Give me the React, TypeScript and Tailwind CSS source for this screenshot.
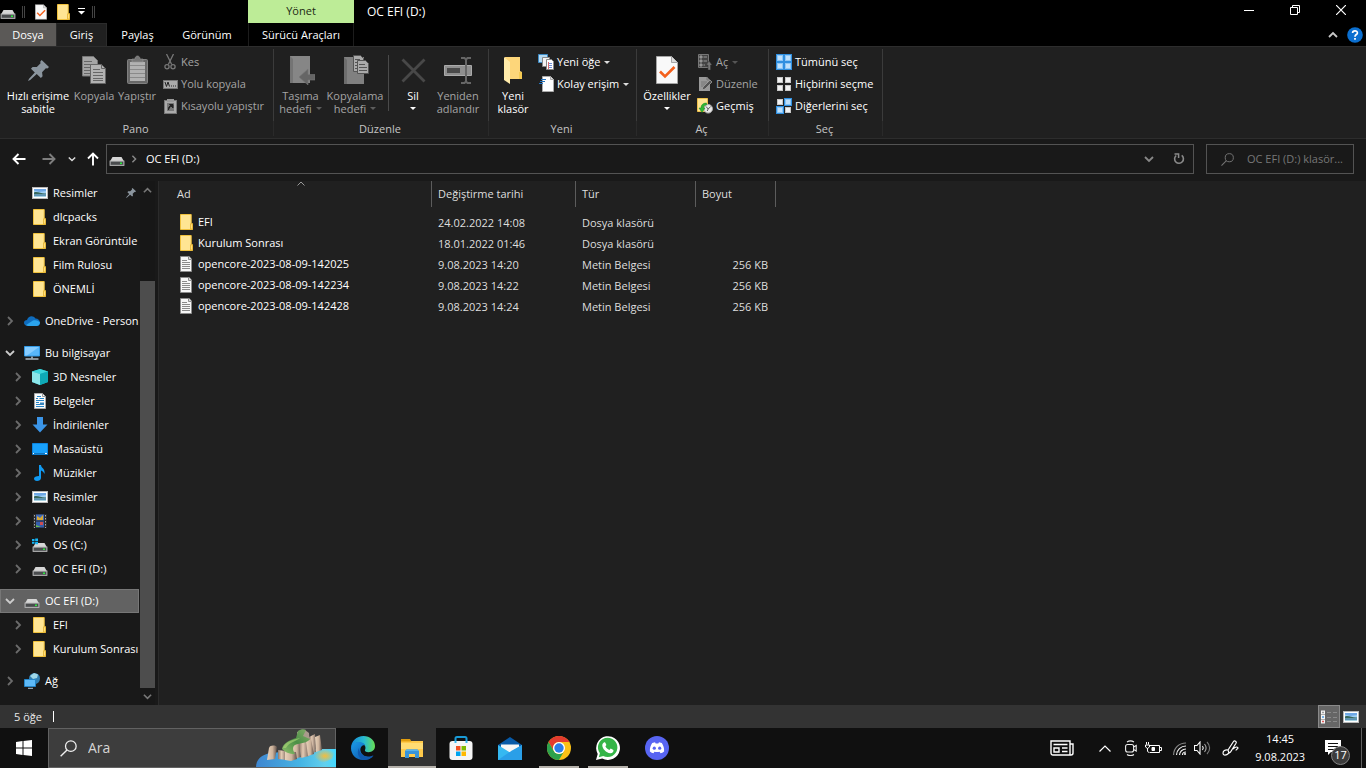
import type { ReactNode } from "react";

/* ---------- shared icons ---------- */

function Folder() {
  return (
    <svg width="16" height="16" viewBox="0 0 16 16" className="shrink-0">
      <path d="M1.500.500h10.700v9.300h1.300v5.700h-12z" fill="#ffe593" stroke="#f0c13c" />
      <path d="M11.500 15V9.800h2V15z" fill="#ffe07c" stroke="#e2b02e" strokeWidth=".8" />
    </svg>
  );
}

function TextFile() {
  return (
    <svg width="16" height="16" viewBox="0 0 16 16" className="shrink-0">
      <path d="M1.500.500h8.600l2.400 2.400v12.600h-11z" fill="#f7f7f7" stroke="#8c8c8c" />
      <path d="M9.500.500v3h3" fill="#ddd" stroke="#8c8c8c" />
      <path d="M3 4.500h5M3 6.500h8M3 8.500h8M3 10.500h8M3 12.500h8" stroke="#8a8a8a" />
    </svg>
  );
}

function Drive({ system = false }: { system?: boolean }) {
  return (
    <svg width="16" height="16" viewBox="0 0 16 16" className="shrink-0">
      <path d="M3.500 6h9L15 10.500H1z" fill="#d6d6d6" />
      <rect x="1" y="10" width="14" height="4.500" fill="#6f7073" stroke="#bdbdbd" strokeWidth=".8" />
      <rect x="2" y="11" width="12" height="2.500" fill="#4a4c4e" />
      <rect x="11" y="11.500" width="2" height="1.500" fill="#2bea3d" />
      {system && (
        <path d="M0 2h2.500v2H0zM3.200 1.500h2.800v2.500H3.200zM0 4.800h2.500v2H0zM3.200 4.800h2.800v2.400H3.200z" fill="#15b5f5" />
      )}
    </svg>
  );
}

function Picture() {
  return (
    <svg width="16" height="16" viewBox="0 0 16 16" className="shrink-0">
      <rect x=".5" y="2.500" width="15" height="11" fill="#fff" stroke="#b9b9b9" />
      <rect x="2" y="4" width="12" height="8" fill="#9fd0f5" />
      <path d="M2 4h12v2L7 7 2 5.500z" fill="#6fa8e6" />
      <path d="M2 7.500c4-1.500 7 1.500 12 1v1H2z" fill="#38685d" />
      <path d="M2 9.500h12V12H2z" fill="#5c93b5" />
      <path d="M2 11h12v1H2z" fill="#a7d3e2" />
    </svg>
  );
}

function Pin({ size = 16 }: { size?: number }) {
  return (
    <svg width={size} height={size} viewBox="0 0 20 20" className="shrink-0">
      <path
        d="M13 0l7 6.600-1.500 1.600-1.500-.3-3.600 3.800.5 3.800-1.600 1.700-4-3.800L2.100 19 0 20l1-2.200 5.500-6L2.800 8.300 4.400 6.600l4 .1L12 3l-.4-1.400z"
        fill="#8b959e"
      />
    </svg>
  );
}

function Chevron({ dir, color = "#777", size = 10 }: { dir: "up" | "down" | "right"; color?: string; size?: number }) {
  const path = { up: "M1 7l4-4 4 4", down: "M1 3l4 4 4-4", right: "M3 1l4 4-4 4" }[dir];
  return (
    <svg width={size} height={size} viewBox="0 0 10 10" className="shrink-0">
      <path d={path} fill="none" stroke={color} strokeWidth="1.800" />
    </svg>
  );
}

function Caret({ color = "#fff" }: { color?: string }) {
  return (
    <svg width="6" height="3" viewBox="0 0 6 3" className="shrink-0">
      <path d="M0 0h6L3 3z" fill={color} />
    </svg>
  );
}

function Checked({ width, height }: { width: number; height: number }) {
  return (
    <svg width={width} height={height} viewBox="0 0 22 28" className="shrink-0">
      <path d="M.5.500h15l6 6v21H.5z" fill="#f9f9f9" stroke="#a5a5a5" />
      <path d="M15.500.500v6h6" fill="#dcdcdc" stroke="#a5a5a5" />
      <path d="M4 15.500l5 5 9.500-9.500" fill="none" stroke="#f4601c" strokeWidth="2.600" />
    </svg>
  );
}

/* ---------- title bar and tabs ---------- */

function TitleBar() {
  return (
    <div className="flex h-[23px]">
      <div className="flex w-[248px] items-center">
        <Drive />
        <span className="ml-[6px] h-3 w-[3px] border-x border-[#444]" />
        <button aria-label="Özellikler" className="ml-[10px]"><Checked width={12} height={16} /></button>
        <button aria-label="Yeni klasör" className="ml-[9px]"><Folder /></button>
        <button aria-label="Hızlı Erişim Araç Çubuğunu Özelleştir" className="ml-[6px]">
          <svg width="7" height="7" viewBox="0 0 7 7">
            <path d="M0 .5h7" stroke="#fff" />
            <path d="M0 3h7L3.500 6.500z" fill="#fff" />
          </svg>
        </button>
        <span className="ml-[7px] h-3 w-[3px] border-x border-[#444]" />
      </div>
      <div className="flex w-[106px] items-center justify-center bg-[#bdec97] pb-[2px] text-[#1c2a12]">Yönet</div>
      <h1 className="flex flex-1 items-center pl-[13px] text-[12px]">OC EFI (D:)</h1>
      <div className="flex pr-[2px]">
        <button aria-label="Simge durumuna küçült" className="flex w-[46px] justify-center pt-[5px]">
          <svg width="10" height="10" viewBox="0 0 10 10"><path d="M0 5.500h10" stroke="#fff" /></svg>
        </button>
        <button aria-label="Önceki boyut" className="flex w-[46px] justify-center pt-[5px]">
          <svg width="10" height="10" viewBox="0 0 10 10">
            <path d="M.5 2.500h7v7h-7zM2.500 2V.5h7v7H8" fill="none" stroke="#fff" />
          </svg>
        </button>
        <button aria-label="Kapat" className="flex w-[46px] justify-center pt-[5px]">
          <svg width="10" height="10" viewBox="0 0 10 10"><path d="M0 0l10 10M10 0L0 10" stroke="#fff" strokeWidth="1.200" /></svg>
        </button>
      </div>
    </div>
  );
}

function TabRow() {
  return (
    <div className="flex h-[23px]">
      <button className="w-14 bg-[#5b5957]">Dosya</button>
      <button className="w-[51px] border-x border-t border-[#2b2b2b] bg-[#202020]">Giriş</button>
      <button className="w-[61px]">Paylaş</button>
      <button className="mr-[2px] w-[78px]">Görünüm</button>
      <button className="w-[106px] border-x border-[#1c1c1c]">Sürücü Araçları</button>
      <div className="flex flex-1 items-center justify-end gap-[9px] pr-[3px]">
        <button aria-label="Şeridi küçült"><Chevron dir="up" color="#c8c8c8" /></button>
        <button aria-label="Yardım">
          <svg width="16" height="16" viewBox="0 0 16 16">
            <circle cx="8" cy="8" r="7.800" fill="#0b6fd0" />
            <path d="M5.600 6C5.600 3.200 10.400 3.200 10.400 5.900 10.400 7.500 8 7.600 8 9.700" fill="none" stroke="#fff" strokeWidth="1.700" />
            <path d="M7.100 11h1.800v1.800H7.100z" fill="#fff" />
          </svg>
        </button>
      </div>
    </div>
  );
}

/* ---------- ribbon ---------- */

function Group({ label, width, children }: { label: string; width: string; children: ReactNode }) {
  return (
    <section aria-label={label} className={`flex flex-col py-[2px] ${width}`}>
      <div className="flex flex-1 border-r border-[#3b3b3b]">
        <div className="flex flex-1 pt-[2px]">{children}</div>
      </div>
      <div className="h-[15px] border-r border-[#2a2a2a] pr-[2px] text-center text-[#c5c5c5]">{label}</div>
    </section>
  );
}

function Big({ icon, lines, width, disabled, caret }: {
  icon: ReactNode; lines: string[]; width: string; disabled?: boolean; caret?: "own" | "inline";
}) {
  return (
    <button className={`flex flex-col items-center whitespace-nowrap leading-[13px] ${width} ${disabled ? "text-[#a5a5a5]" : "text-white"}`}>
      <span className="flex h-[38px] items-center justify-center">{icon}</span>
      <span>{lines[0]}</span>
      {lines[1] && (
        <span className="flex items-center gap-1">
          {lines[1]}
          {caret === "inline" && <Caret color="#5d5d5d" />}
        </span>
      )}
      {caret === "own" && <span className="flex h-[13px] items-center"><Caret /></span>}
    </button>
  );
}

function Small({ icon, label, disabled, caret }: { icon: ReactNode; label: string; disabled?: boolean; caret?: boolean }) {
  return (
    <button className={`flex h-[22px] items-center whitespace-nowrap ${disabled ? "text-[#a5a5a5]" : "text-white"}`}>
      <span className="mr-[3px] flex w-4 justify-center">{icon}</span>
      {label}
      {caret && <span className="ml-1"><Caret color={disabled ? "#555" : "#ddd"} /></span>}
    </button>
  );
}

function SelectIcon({ on }: { on: boolean[] }) {
  const spots = [[0, 0], [8, 0], [0, 8], [8, 8]];
  return (
    <svg width="16" height="16" viewBox="0 0 16 16">
      {spots.map(([x, y], i) => (
        <g key={i}>
          {on[i] && <rect x={x} y={y} width="8" height="8" fill="#2f8fe0" />}
          <rect x={x + 1.5} y={y + 1.5} width="5" height="5" fill={on[i] ? "#bfe0fb" : "#f2f2f2"} stroke={on[i] ? "#8cc6f6" : "#c8c8c8"} />
        </g>
      ))}
    </svg>
  );
}

const copyIcon = (
  <svg width="26" height="30" viewBox="0 0 26 30">
    <path d="M1.500 1.500h11l4 4V21h-15z" fill="#a5a5a5" stroke="#777" />
    <path d="M3 6.500h8M3 9.500h9M3 12.500h9M3 15.500h9M3 18.500h9" stroke="#666" />
    <path d="M9.500 9.500h11l4 4v15h-15z" fill="#b2b2b2" stroke="#666" />
    <path d="M20.500 9.500v4h4M12 14.500h7M12 17.500h10M12 20.500h10M12 23.500h10M12 25.500h10" fill="none" stroke="#666" />
  </svg>
);
const pasteIcon = (
  <svg width="21" height="30" viewBox="0 0 21 30">
    <rect x=".5" y="4.500" width="20" height="24" rx="1" fill="#686868" stroke="#808080" />
    <path d="M3 7h15v19H3z" fill="#b2b2b2" />
    <path d="M3 10.500h15M3 14.500h15M3 18.500h15M3 22.500h15" stroke="#8a8a8a" />
    <path d="M5 7V4h3c0-4 5-4 5 0h3v3z" fill="#777" stroke="#999" strokeWidth=".6" />
  </svg>
);
const cutIcon = (
  <svg width="12" height="16" viewBox="0 0 12 16" fill="none" stroke="#777" strokeWidth="1.300">
    <path d="M2.500 0l5.200 10.500M9.500 0L4.300 10.500" /><circle cx="3" cy="12.800" r="2.100" /><circle cx="9" cy="12.800" r="2.100" />
  </svg>
);
const pathIcon = (
  <svg width="15" height="9" viewBox="0 0 15 9">
    <rect x=".5" y=".5" width="14" height="8" fill="#aaa" stroke="#777" />
    <path d="M2 2l1.500 4.500L5 2l1.500 4.500M8 6h1M10 6h1M12 6h1" fill="none" stroke="#222" />
  </svg>
);
const pasteLinkIcon = (
  <svg width="13" height="15" viewBox="0 0 13 15">
    <rect x=".5" y="1.500" width="12" height="13" fill="#aaa" stroke="#777" /><path d="M3 0h7v3H3z" fill="#999" />
    <path d="M3 4h7v8H3z" fill="#777" /><path d="M4.500 11c0-3 .5-4 3-4.500M5.500 5.500H9V9z" fill="#222" stroke="#222" />
  </svg>
);
const moveIcon = (
  <svg width="28" height="30" viewBox="0 0 28 30">
    <path d="M3 1h20v27H3z" fill="#868686" /><path d="M3 1l3 3v24H3z" fill="#747474" />
    <path d="M28 19.500h-7v-5.500l-9 8 9 8v-5h7z" fill="#656565" stroke="#777" strokeWidth=".6" />
  </svg>
);
const copyToIcon = (
  <svg width="28" height="32" viewBox="0 0 28 32">
    <path d="M3 3h20v27H3z" fill="#808080" /><path d="M3 3l3 3v24H3z" fill="#6d6d6d" />
    <path d="M12.500 1.500h7l3 3v13h-10z" fill="#aaa" stroke="#555" /><path d="M14 5.500h5M14 8.500h7M14 11.500h7M14 14.500h7" stroke="#555" />
    <path d="M16.500 6.500h8l3 3v10h-11z" fill="#aaa" stroke="#555" /><path d="M18 10.500h6M18 13.500h8M18 16.500h8" stroke="#555" />
  </svg>
);
const deleteIcon = (
  <svg width="25" height="25" viewBox="0 0 25 25"><path d="M1.500 1.500l22 22M23.500 1.500l-22 22" stroke="#484848" strokeWidth="2.800" /></svg>
);
const renameIcon = (
  <svg width="28" height="27" viewBox="0 0 28 27">
    <path d="M.5 8.500h27v10H.5z" fill="#8f8f8f" stroke="#aaa" /><path d="M3 11h13v5H3z" fill="#4a4a4a" />
    <path d="M17 1h3.500l1.500 1.500L23.500 1H27M22 2v23M17 26h3.500l1.500-1.500 1.500 1.500H27" fill="none" stroke="#666" strokeWidth="2" />
  </svg>
);
const newFolderIcon = (
  <svg width="20" height="28" viewBox="0 0 20 28">
    <path d="M2 1h15v14l2 1v7H2z" fill="#fdd67a" /><path d="M1 1l6 5v22l-6-4z" fill="#ffebaa" />
    <path d="M16 16h3v7h-3z" fill="#f5ca53" />
  </svg>
);
const newItemIcon = (
  <svg width="16" height="16" viewBox="0 0 16 16">
    <path d="M.5.500h9v8h-9z" fill="#b4daf3" stroke="#3c8ac5" /><path d="M4.500 3.500h7v9h-7z" fill="#f3f3f3" stroke="#888" />
    <path d="M8.500 5.500h5l2 2v8h-7z" fill="#fff" stroke="#888" /><path d="M10 9.500h4M10 11.500h4M10 13.500h4" stroke="#6d8fd8" /><path d="M10.500 8v7" stroke="#dc6d70" />
  </svg>
);
const easyIcon = (
  <svg width="15" height="16" viewBox="0 0 15 16">
    <path d="M3.500.500h8l3 3v12h-11z" fill="#fff" stroke="#aaa" /><path d="M11.500.500v3h3" fill="#ddd" stroke="#aaa" />
    <path d="M2 3.500h5M1 5.500h5M0 7.500h4" stroke="#2472bd" strokeWidth="1.200" />
  </svg>
);
const openIcon = (
  <svg width="14" height="16" viewBox="0 0 14 16">
    <path d="M.5.500h10v13H.5z" fill="#444" stroke="#777" /><path d="M2 2h2v2H2zM2 6h2v2H2zM2 10h2v2H2zM5.500 3H9M5.500 7H9M5.500 11H7" stroke="#999" fill="#888" />
    <path d="M10 16V11H8l3-4 3 4h-1.500v5z" fill="#777" stroke="#333" strokeWidth=".5" />
  </svg>
);
const editIcon = (
  <svg width="14" height="16" viewBox="0 0 14 16">
    <path d="M1 1h8l3 3v11H1z" fill="#999" /><path d="M9 1v3h3M3 6h6M3 8h6M3 10h4" stroke="#777" fill="none" /><path d="M4 14l1-3 7-7 2 2-7 7z" fill="#555" stroke="#aaa" strokeWidth=".7" />
  </svg>
);
const historyIcon = (
  <svg width="16" height="16" viewBox="0 0 16 16">
    <path d="M.5.500h10v13H.5z" fill="#ffe593" stroke="#edc04a" /><circle cx="11.200" cy="10.800" r="4.300" fill="#e8e8e8" stroke="#aaa" />
    <path d="M9 8.500l2.200 2.500 2.500-2.500M11.200 11l-1 2" fill="none" stroke="#555" /><path d="M9.500 5C6 5 4 7 4 10H2l3 4.500L8 10H6.500c0-2 1-3 3-3z" fill="#30b832" stroke="#198327" strokeWidth=".5" />
  </svg>
);

function Ribbon() {
  return (
    <div className="flex h-[93px] border-y border-[#2d2d2d] bg-[#202020]">
      <Group label="Pano" width="w-[274px]">
        <div className="flex pl-[5px]">
          <Big icon={<Pin size={21} />} lines={["Hızlı erişime", "sabitle"]} width="w-[66px]" />
          <Big icon={copyIcon} lines={["Kopyala"]} width="w-[46px]" disabled />
          <Big icon={pasteIcon} lines={["Yapıştır"]} width="w-10" disabled />
          <div className="pl-[5px]">
            <Small icon={cutIcon} label="Kes" disabled />
            <Small icon={pathIcon} label="Yolu kopyala" disabled />
            <Small icon={pasteLinkIcon} label="Kısayolu yapıştır" disabled />
          </div>
        </div>
      </Group>
      <Group label="Düzenle" width="w-[215px]">
        <div className="flex pl-[1px]">
          <Big icon={moveIcon} lines={["Taşıma", "hedefi"]} width="w-[51px]" disabled caret="inline" />
          <Big icon={copyToIcon} lines={["Kopyalama", "hedefi"]} width="w-[58px]" disabled caret="inline" />
          <span className="mx-[4px] mt-1 h-[56px] w-px bg-[#4a4a4a]" />
          <Big icon={deleteIcon} lines={["Sil"]} width="w-[40px]" caret="own" />
          <Big icon={renameIcon} lines={["Yeniden", "adlandır"]} width="w-[50px]" disabled />
        </div>
      </Group>
      <Group label="Yeni" width="w-[148px]">
        <div className="flex pl-[2px]">
          <Big icon={newFolderIcon} lines={["Yeni", "klasör"]} width="w-[44px]" />
          <div className="pl-[3px]">
            <Small icon={newItemIcon} label="Yeni öğe" caret />
            <Small icon={easyIcon} label="Kolay erişim" caret />
          </div>
        </div>
      </Group>
      <Group label="Aç" width="w-[132px]">
        <div className="flex pl-[2px]">
          <Big icon={<Checked width={22} height={28} />} lines={["Özellikler"]} width="w-[56px]" caret="own" />
          <div className="pl-[2px]">
            <Small icon={openIcon} label="Aç" disabled caret />
            <Small icon={editIcon} label="Düzenle" disabled />
            <Small icon={historyIcon} label="Geçmiş" />
          </div>
        </div>
      </Group>
      <Group label="Seç" width="w-[114px]">
        <div className="pl-[7px]">
          <Small icon={<SelectIcon on={[true, true, true, true]} />} label="Tümünü seç" />
          <Small icon={<SelectIcon on={[false, false, false, false]} />} label="Hiçbirini seçme" />
          <Small icon={<SelectIcon on={[false, true, true, false]} />} label="Diğerlerini seç" />
        </div>
      </Group>
    </div>
  );
}

/* ---------- address row ---------- */

function Arrow({ d, color, label, width }: { d: string; color: string; label: string; width: string }) {
  return (
    <button aria-label={label} className={`flex justify-center ${width}`}>
      <svg width="14" height="14" viewBox="0 0 14 14"><path d={d} fill="none" stroke={color} strokeWidth="1.900" /></svg>
    </button>
  );
}

function Loupe({ size, color }: { size: number; color: string }) {
  return (
    <svg width={size} height={size} viewBox="0 0 16 16" className="shrink-0">
      <circle cx="10.200" cy="5.800" r="5" fill="none" stroke={color} strokeWidth="1.200" />
      <path d="M6.600 9.400L.6 15.400" stroke={color} strokeWidth="1.300" />
    </svg>
  );
}

function AddressRow() {
  return (
    <div className="flex h-[42px] items-center pr-3 pb-[2px]">
      <div className="flex w-[106px] items-center pl-1">
        <Arrow d="M13.500 7H1.500M6.500 2L1.500 7l5 5" color="#fff" label="Geri" width="w-[30px]" />
        <Arrow d="M.5 7h12M7.500 2l5 5-5 5" color="#7d7d7d" label="İleri" width="w-[30px]" />
        <button aria-label="Son konumlar" className="flex w-4 justify-center"><Chevron dir="down" color="#ddd" size={8} /></button>
        <Arrow d="M7 13.500V1.500M2 6.500l5-5 5 5" color="#fff" label="Yukarı" width="w-[26px]" />
      </div>
      <div className="flex h-[30px] flex-1 items-center border border-[#535353]">
        <span className="ml-[2px]"><Drive /></span>
        <span className="ml-[5px]"><Chevron dir="right" color="#888" size={8} /></span>
        <button className="ml-2 text-white">OC EFI (D:)</button>
        <span className="flex-1" />
        <button aria-label="Önceki konumlar" className="mr-[11px]"><Chevron dir="down" color="#888" /></button>
        <button aria-label="Yenile" className="ml-2 mr-[8px]">
          <svg width="12" height="12" viewBox="0 0 12 12">
            <path d="M8.700 2.400A4.400 4.400 0 1 1 3.200 2.500" fill="none" stroke="#8a8a8a" strokeWidth="1.600" />
            <path d="M1.500.900h4.100v4.100" fill="none" stroke="#8a8a8a" strokeWidth="1.500" />
          </svg>
        </button>
      </div>
      <label className="ml-3 flex h-[30px] w-[148px] items-center border border-[#535353] pr-1 pl-[14px]">
        <Loupe size={13} color="#747474" />
        <input aria-label="Klasörde ara" placeholder="OC EFI (D:) klasör..." className="ml-[13px] w-full min-w-0 bg-transparent outline-none placeholder:text-[#777]" />
      </label>
    </div>
  );
}

/* ---------- navigation tree ---------- */

const cloud = (
  <svg width="16" height="16" viewBox="0 0 16 16">
    <path d="M3 7C4 3 9 1.500 11.500 5.500 14 5.500 16 7.500 16 9.500 16 12 14 13 12.500 13H4C1.500 13 0 11.500 0 9.700 0 8 1.500 7 3 7z" fill="#0f6cbd" />
    <path d="M2 12L9 7.500c3-1 6 .5 7 2C16 12 14 13 12.500 13H4z" fill="#2ba3ec" />
  </svg>
);
const pc = (
  <svg width="16" height="16" viewBox="0 0 16 16">
    <path d="M.5 1.500h15v9.500H.5z" fill="#58b6fa" stroke="#329ae6" /><path d="M1 2h14L3 10.500H1z" fill="#86ccff" />
    <path d="M7 11.500h2v2H7z" fill="#8a9aa8" /><path d="M1.500 14h13" stroke="#b8c4cf" strokeWidth="1.400" />
  </svg>
);
const cube = (
  <svg width="16" height="16" viewBox="0 0 16 16">
    <path d="M8 0l8 2.500v10.500L8 16 0 13V2.500z" fill="#1eb9c4" /><path d="M8 0l8 2.500L8 5 0 2.500z" fill="#3cd5dc" />
    <path d="M0 2.500L8 5v11l-8-3z" fill="#8be6ea" /><path d="M8 5l8-2.500v10.500L8 16z" fill="#0fa9b6" />
  </svg>
);
const doc = (
  <svg width="16" height="16" viewBox="0 0 16 16">
    <path d="M2.500.500h8l3 3v12h-11z" fill="#fafafa" stroke="#aaa" /><path d="M10.500.500v3h3" fill="none" stroke="#999" />
    <path d="M4 5.500h2M5 3.500h4M7.500 5.500h4.500M4 7.500h8M4 9.500h3M4 11.500h4M4 13.500h8" stroke="#2784c6" /><path d="M8 9.500h4v2.500H8z" fill="#3684bd" />
  </svg>
);
const down = <svg width="16" height="16" viewBox="0 0 16 16"><path d="M5 0h6v7.500h4.500L8 15.500.5 7.500H5z" fill="#3b95e8" /></svg>;
const desk = (
  <svg width="16" height="16" viewBox="0 0 16 16">
    <path d="M.5 2.500h15v11H.5z" fill="#18a0fb" stroke="#0c83dd" /><path d="M0 12h16v1.500H0z" fill="#1074bd" /><path d="M1 12.500h1M13 12.500h2" stroke="#fff" />
  </svg>
);
const note = (
  <svg width="16" height="16" viewBox="0 0 16 16"><path d="M7 0h2c0 3 4.500 3.500 3.500 9-.8-2-2-3-3.500-3.500V13c0 2-2 3-4 3s-3-1-3-2.500S4 11 7 11z" fill="#109af2" /></svg>
);
const video = (
  <svg width="16" height="16" viewBox="0 0 16 16">
    <path d="M1 1h14v14H1z" fill="#292929" /><path d="M4 1.500h8v6H4z" fill="#406bbc" /><path d="M4 8.500h8v6H4z" fill="#355dad" />
    <path d="M5 3l3 2 3-3v5H5z" fill="#d9a932" /><path d="M8 9h3v3H8z" fill="#cf4e51" /><path d="M4 12l5 2H4z" fill="#65b950" />
    <path d="M2.500 2v13M13.500 2v13" stroke="#aaa" strokeDasharray="1.500 1.500" />
  </svg>
);
const network = (
  <svg width="16" height="16" viewBox="0 0 16 16">
    <circle cx="10.500" cy="5.500" r="5.500" fill="#327fb1" /><path d="M6 3l4-3 4 1.500-1 3.500-4 1z" fill="#9fd8e8" />
    <path d="M.5 6.500h11v7H.5z" fill="#5ebaf8" stroke="#2485c8" /><path d="M4 15.300h5" stroke="#a8c5d9" />
  </svg>
);

type Node = { label: string; icon: ReactNode; level: 0 | 1; open?: boolean; leaf?: boolean; gap?: boolean; pinned?: boolean; selected?: boolean };

const nodes: Node[] = [
  { label: "Resimler", icon: <Picture />, level: 1, leaf: true, pinned: true },
  { label: "dlcpacks", icon: <Folder />, level: 1, leaf: true },
  { label: "Ekran Görüntüle", icon: <Folder />, level: 1, leaf: true },
  { label: "Film Rulosu", icon: <Folder />, level: 1, leaf: true },
  { label: "ÖNEMLİ", icon: <Folder />, level: 1, leaf: true },
  { label: "OneDrive - Person", icon: cloud, level: 0, gap: true },
  { label: "Bu bilgisayar", icon: pc, level: 0, gap: true, open: true },
  { label: "3D Nesneler", icon: cube, level: 1 },
  { label: "Belgeler", icon: doc, level: 1 },
  { label: "İndirilenler", icon: down, level: 1 },
  { label: "Masaüstü", icon: desk, level: 1 },
  { label: "Müzikler", icon: note, level: 1 },
  { label: "Resimler", icon: <Picture />, level: 1 },
  { label: "Videolar", icon: video, level: 1 },
  { label: "OS (C:)", icon: <Drive system />, level: 1 },
  { label: "OC EFI (D:)", icon: <Drive />, level: 1 },
  { label: "OC EFI (D:)", icon: <Drive />, level: 0, gap: true, open: true, selected: true },
  { label: "EFI", icon: <Folder />, level: 1 },
  { label: "Kurulum Sonrası", icon: <Folder />, level: 1 },
  { label: "Ağ", icon: network, level: 0, gap: true },
];

function Sidebar() {
  return (
    <aside className="flex w-[159px] border-r border-[#2b2b2b]">
      <ul className="w-[139px]">
        {nodes.map((n, i) => (
          <li key={i} className={n.gap ? "mt-2" : ""}>
            <button
              className={`flex h-6 w-full items-center border text-left whitespace-nowrap text-white ${n.level ? "pl-[12px]" : "pl-1"} ${n.selected ? "border-[#777] bg-[#626262]" : "border-transparent"}`}
            >
              <span className="w-[19px] shrink-0">
                {!n.leaf && <Chevron dir={n.open ? "down" : "right"} color={n.open ? "#ccc" : "#6b6b6b"} />}
              </span>
              <span className="mr-[5px] shrink-0">{n.icon}</span>
              {n.label}
              {n.pinned && <span className="ml-auto pr-[2px]"><Pin size={10} /></span>}
            </button>
          </li>
        ))}
      </ul>
      <div className="ml-[1px] flex w-[15px] flex-col bg-[#171717]">
        <button aria-label="Yukarı kaydır" className="flex h-[18px] items-center justify-center"><Chevron dir="up" size={9} /></button>
        <div className="grow-[82]" />
        <div className="grow-[407] bg-[#4d4d4d]" />
        <button aria-label="Aşağı kaydır" className="flex h-[17px] items-center justify-center"><Chevron dir="down" size={9} /></button>
      </div>
    </aside>
  );
}

/* ---------- file list ---------- */

const files = [
  { name: "EFI", date: "24.02.2022 14:08", type: "Dosya klasörü", size: "" },
  { name: "Kurulum Sonrası", date: "18.01.2022 01:46", type: "Dosya klasörü", size: "" },
  { name: "opencore-2023-08-09-142025", date: "9.08.2023 14:20", type: "Metin Belgesi", size: "256 KB" },
  { name: "opencore-2023-08-09-142234", date: "9.08.2023 14:22", type: "Metin Belgesi", size: "256 KB" },
  { name: "opencore-2023-08-09-142428", date: "9.08.2023 14:24", type: "Metin Belgesi", size: "256 KB" },
];

function FileList() {
  return (
    <main className="flex-1 bg-[#202020]">
      <table className="table-fixed border-separate border-spacing-0 text-left whitespace-nowrap">
        <colgroup>
          <col className="w-[273px]" />
          <col className="w-[144px]" />
          <col className="w-[120px]" />
          <col className="w-[80px]" />
        </colgroup>
        <thead className="text-[#dedede]">
          <tr className="h-[26px]">
            <th className="relative border-r border-[#5c5c5c] pl-[18px] font-normal">
              Ad
              <span className="absolute inset-x-0 top-0 flex justify-center pl-3">
                <svg width="8" height="5" viewBox="0 0 8 5"><path d="M.5 4.500L4 1l3.500 3.500" fill="none" stroke="#999" /></svg>
              </span>
            </th>
            <th className="border-r border-[#5c5c5c] pl-[6px] font-normal">Değiştirme tarihi</th>
            <th className="border-r border-[#5c5c5c] pl-[6px] font-normal">Tür</th>
            <th className="border-r border-[#5c5c5c] pl-[6px] font-normal">Boyut</th>
          </tr>
        </thead>
        <tbody className="text-[#dedede]">
          <tr aria-hidden="true" className="h-[5px]"><td colSpan={4} /></tr>
          {files.map((f) => (
            <tr key={f.name} className="h-[21px]">
              <td className="pl-5 text-white">
                <span className="flex items-center gap-[3px] pb-px">
                  {f.size ? <TextFile /> : <Folder />}
                  {f.name}
                </span>
              </td>
              <td className="pl-[6px]">{f.date}</td>
              <td className="pl-[6px]">{f.type}</td>
              <td className="pr-2 text-right">{f.size}</td>
            </tr>
          ))}
        </tbody>
      </table>
    </main>
  );
}

function StatusBar() {
  return (
    <footer className="flex h-[23px] items-center bg-[#333] pl-[14px] text-[#e8e8e8]">
      <span>5 öğe</span>
      <span className="ml-[11px] h-[11px] w-px bg-white" />
      <span className="flex-1" />
      <button aria-label="Ayrıntılar" className="flex h-[23px] w-[22px] items-center justify-center border border-[#8a8a8a] bg-[#666]">
        <svg width="16" height="14" viewBox="0 0 16 14">
          <path d="M0 .5h4v4H0zM0 5h4v4H0zM0 9.500h4v4H0z" fill="#f5f5f5" /><path d="M1.200 2.500h1.600" stroke="#888" strokeWidth="1.500" /><path d="M1.200 7h1.600" stroke="#2384d8" strokeWidth="1.500" /><path d="M1.200 11.500h1.600" stroke="#d33" strokeWidth="1.500" />
          <path d="M6 2.500h4M12 2.500h4M6 7.500h4M12 7.500h4M6 11.500h4M12 11.500h4" stroke="#8a8a8a" />
        </svg>
      </button>
      <button aria-label="Büyük simgeler" className="mr-[7px] ml-[3px]"><Picture /></button>
    </footer>
  );
}

/* ---------- taskbar ---------- */

const island = (
  <svg width="80" height="38" viewBox="0 0 80 38">
    <defs>
      <linearGradient id="sea"><stop stopColor="#3f86d0" /><stop offset=".55" stopColor="#45b4e4" /><stop offset=".86" stopColor="#62d0ee" /><stop offset="1" stopColor="#43d9ff" /></linearGradient>
      <linearGradient id="rockA" x1="0" x2="1"><stop stopColor="#e9d3bb" /><stop offset=".55" stopColor="#cdb39c" /><stop offset="1" stopColor="#5f504a" /></linearGradient>
      <linearGradient id="rockB" x1="0" x2="1"><stop stopColor="#8d7769" /><stop offset=".4" stopColor="#e3cab3" /><stop offset="1" stopColor="#77655c" /></linearGradient>
      <linearGradient id="moss" x1="0" y1="1" x2="1" y2="0"><stop stopColor="#8fc06c" /><stop offset=".5" stopColor="#4a8f45" /><stop offset="1" stopColor="#86ad6b" /></linearGradient>
      <radialGradient id="sun"><stop stopColor="#f3bd3c" /><stop offset="1" stopColor="#f3bd3c" stopOpacity="0" /></radialGradient>
    </defs>
    <path d="M0 38c0-7 5-12 14-14l48-4h18v18z" fill="url(#sea)" />
    <path d="M58 20h22l-4 10-10 4-8-6z" fill="url(#sun)" />
    <path d="M53 8l6-3 1 18-7 2z" fill="url(#rockB)" />
    <path d="M59 8l5-2 2 15-6 2z" fill="url(#rockA)" />
    <path d="M41 3l8-2 4 3 1 12-12 3z" fill="#a99a8c" />
    <path d="M36 15l8-2 1 15-7 2z" fill="url(#rockA)" />
    <path d="M43 14l8-2 2 15-8 2z" fill="url(#rockB)" />
    <path d="M50 12l5-2 3 15-6 2z" fill="url(#rockA)" />
    <path d="M13 19c1-3 6-3 8-1l-2 12-8 1z" fill="url(#rockA)" />
    <path d="M22 21l8 1 1 9-9-1z" fill="url(#rockB)" />
    <path d="M29 22l11 1 1 7-6 2-6-1z" fill="url(#rockA)" />
    <path d="M42 2c3-2 6-2 8-1l-3 6 7 3c-2 4-10 4-15 6-2 1-3 4 0 9-6 0-10-2-13-5 1-6 8-9 14-11z" fill="url(#moss)" />
    <path d="M44 9c-3 3-11 4-14 10l-3 0c2-6 8-8 17-10z" fill="#b1d77a" opacity=".6" />
  </svg>
);

const edge = (
  <svg width="24" height="24" viewBox="0 0 24 24">
    <defs>
      <linearGradient id="e1"><stop stopColor="#1488d8" /><stop offset=".55" stopColor="#28bad0" /><stop offset="1" stopColor="#68df52" /></linearGradient>
      <linearGradient id="e2" x1="0" y1="0" x2="1" y2="1"><stop stopColor="#1b9ce8" /><stop offset="1" stopColor="#0b4ba3" /></linearGradient>
    </defs>
    <path d="M0 12C0 5 5.500 0 12.500 0 19 0 24 4.500 24 10c0 4-3 6.200-6.500 6.200-2.500 0-4.200-1-3.500-2.200C16 10 12 6.500 8 6.500 4 6.500 1 9 0 12z" fill="url(#e1)" />
    <path d="M0 12c.5-4 4-6 8-6 3.200 0 5.500 1.300 6.200 3.300C9 8 6.500 17 15 20.500c3 1.200 5.700.3 7.500-.8C20 23 16 24 12 24 5 24 0 18.500 0 12z" fill="url(#e2)" />
    <path d="M8 12c0 5 4.500 8.500 9 8.500 2 0 4-.5 5.500-1.500C20 23 16.500 24 13 24c-5-1-8-7-5-12z" fill="#1059ad" />
  </svg>
);
const explorer = (
  <svg width="22" height="19" viewBox="0 0 22 19">
    <path d="M0 2h22v16H0z" fill="#ffca4b" /><path d="M0 0h9l1.500 2.500H0z" fill="#e19d0e" /><path d="M0 4h22v6H0z" fill="#ffdc73" />
    <path d="M4 19v-7l1.500-1.500h11L18 12v7h-4v-4H8v4z" fill="#3994d9" /><path d="M5.500 10.500h11l1 1.500h-13z" fill="#56b4ee" />
  </svg>
);
const store = (
  <svg width="24" height="24" viewBox="0 0 24 24">
    <path d="M6.500 8V2.500c0-1 .5-1.500 1.500-1.500h8c1 0 1.500.5 1.500 1.500V8" fill="none" stroke="#199bd7" strokeWidth="2" />
    <rect x=".5" y="5" width="23" height="19" rx="3" fill="#f5f5f5" /><path d="M6.500 5v2M17.500 5v2" stroke="#36b8f0" strokeWidth="2" />
    <path d="M7 10h4.500v4.500H7z" fill="#f25022" /><path d="M12.500 10H17v4.500h-4.500z" fill="#7fba00" /><path d="M7 15.500h4.500V20H7z" fill="#00a4ef" /><path d="M12.500 15.500H17V20h-4.500z" fill="#ffb900" />
  </svg>
);
const mail = (
  <svg width="24" height="23" viewBox="0 0 24 23">
    <path d="M0 8L12 0l12 8v14H0z" fill="#075aa8" /><path d="M3 7.500h18v8H3z" fill="#f6f6f6" />
    <path d="M0 8l12 7.500L24 8v15H0z" fill="#35b8f1" /><path d="M0 23l14-9.500L24 8v15z" fill="#2a9fe8" />
  </svg>
);
const chrome = (
  <svg width="24" height="24" viewBox="0 0 24 24">
    <circle cx="12" cy="12" r="12" fill="#fbc116" />
    <path d="M1.600 6A12 12 0 0 1 22.400 6H12a6 6 0 0 0-5.200 9z" fill="#e33b2e" />
    <path d="M1.600 6l5.200 9A6 6 0 0 0 17.200 15L12 24A12 12 0 0 1 1.600 6z" fill="#2da14d" />
    <circle cx="12" cy="12" r="6" fill="#fff" /><circle cx="12" cy="12" r="4.700" fill="#2b7de9" />
  </svg>
);
const whatsapp = (
  <svg width="24" height="24" viewBox="0 0 24 24">
    <path d="M0 24l1.700-6.100A11.900 11.900 0 1 1 6.200 22.400z" fill="#fff" /><path d="M2.800 21.200l1.100-4A9.700 9.700 0 1 1 7.200 20z" fill="#35b548" />
    <path d="M7.600 6.700c.8-.8 1.500-.6 1.800 0l1 2.300-1 1.300c.8 1.700 2.200 3 4 3.800l1.300-1.500 2.700 1.300c.5 2-1.200 3.500-3.200 3.300-4-.5-8-4.600-7.900-8 0-1 .6-1.900 1.300-2.500z" fill="#fff" />
  </svg>
);
const discord = (
  <svg width="24" height="24" viewBox="0 0 24 24">
    <circle cx="12" cy="12" r="12" fill="#5865f2" />
    <path d="M7.200 7.100L10 6.300l.7 1.100h2.600l.7-1.100 2.800.8c1.700 2.500 2.500 5.200 2.300 8.300-1.200 1-2.400 1.500-3.600 1.800l-.9-1.500c-1.700.5-3.500.5-5.200 0l-.9 1.500c-1.200-.3-2.400-.8-3.600-1.800-.2-3.100.6-5.800 2.300-8.300z" fill="#fff" />
    <circle cx="9.300" cy="12.200" r="1.600" fill="#5865f2" /><circle cx="14.700" cy="12.200" r="1.600" fill="#5865f2" />
  </svg>
);

const apps = [
  { name: "Microsoft Edge", icon: edge, state: "none" },
  { name: "Dosya Gezgini", icon: explorer, state: "active" },
  { name: "Microsoft Store", icon: store, state: "none" },
  { name: "Posta", icon: mail, state: "none" },
  { name: "Google Chrome", icon: chrome, state: "running" },
  { name: "WhatsApp", icon: whatsapp, state: "running" },
  { name: "Discord", icon: discord, state: "none" },
];

function Taskbar() {
  return (
    <nav aria-label="Görev çubuğu" className="flex h-10 bg-[#101010] text-white">
      <button aria-label="Başlat" className="flex w-12 items-center justify-center">
        <svg width="16" height="16" viewBox="0 0 16 16"><path d="M0 2l6.500-1v6.500H0zM7.500.900L16 0v7.500H7.500zM0 8.500h6.500V15L0 14zM7.500 8.500H16V16l-8.500-1z" fill="#fff" /></svg>
      </button>
      <label className="mr-[3px] flex w-[288px] items-center border border-[#626262] bg-[#3d3d3d] pl-[11px]">
        <Loupe size={17} color="#f0f0f0" />
        <input aria-label="Ara" placeholder="Ara" className="ml-[11px] min-w-0 flex-1 bg-transparent text-[14px] outline-none placeholder:text-[#d5d5d5]" />
        <span className="-mr-px self-end">{island}</span>
      </label>
      <div className="flex gap-px">
        {apps.map((a) => (
          <button key={a.name} aria-label={a.name} className={`flex w-12 flex-col items-center ${a.state === "active" ? "bg-[#333]" : ""}`}>
            <span className="flex flex-1 items-center pt-[2px]">{a.icon}</span>
            <span className={`h-[2px] ${a.state === "active" ? "w-full bg-[#b5b1ab]" : a.state === "running" ? "w-10 bg-[#b5b1ab]" : "w-0"}`} />
          </button>
        ))}
      </div>
      <div className="flex flex-1 items-center justify-end">
        <button aria-label="Haberler" className="mr-[25px]">
          <svg width="24" height="16" viewBox="0 0 24 16" fill="none" stroke="#fff" strokeWidth="1.400">
            <path d="M1 1h19v14H3c-1.200 0-2-.8-2-2zM20 4h3v9c0 1.200-.8 2-2 2h-3M3.500 4.500h14M12 8h5.500M12 11.500h5.500" /><path d="M4 8h5v4H4z" />
          </svg>
        </button>
        <button aria-label="Gizli simgeler" className="mr-[14px]">
          <svg width="12" height="7" viewBox="0 0 12 7"><path d="M.5 6.500L6 1l5.500 5.500" fill="none" stroke="#fff" strokeWidth="1.200" /></svg>
        </button>
        <button aria-label="Toplantı" className="mr-2">
          <svg width="12" height="16" viewBox="0 0 12 16" fill="none" stroke="#eee" strokeWidth="1.100">
            <rect x=".6" y="4.500" width="8" height="7.500" rx="2" /><path d="M8.600 7l2.600-1.500v5.500L8.600 9.500M2 2c2-1.300 5-1.300 7 0M2 14.500c2 1.300 5 1.300 7 0" />
          </svg>
        </button>
        <button aria-label="Pil" className="mr-[11px]">
          <svg width="17" height="12" viewBox="0 0 17 12" fill="none" stroke="#fff">
            <path d="M5 3.500h9.500v7H5M15 5.500h1.500v3H15M1.500 0v2.500M3.500 0v2.500M.5 3h4v2l-2 1.500-2-1.500zM2.500 6v3c0 1.500 2 1 2 2" /><path d="M7 5.500h2.500v3H7z" fill="#fff" />
          </svg>
        </button>
        <button aria-label="Kablosuz ağ" className="mr-2">
          <svg width="13" height="13" viewBox="0 0 13 13" fill="none" stroke="#eee" strokeWidth="1.200">
            <path d="M.6 13C.6 6 6 1 13 1" stroke="#888" /><path d="M3.500 13c0-5 4.500-9 9.500-9" /><path d="M6.500 13c0-3.500 3-6 6.500-6M9.500 13c0-2 1.500-3 3.500-3" /><circle cx="12" cy="12" r="1" fill="#fff" stroke="none" />
          </svg>
        </button>
        <button aria-label="Ses" className="mr-[11px]">
          <svg width="17" height="14" viewBox="0 0 17 14" fill="none" stroke="#fff" strokeWidth="1.100">
            <path d="M.5 4.500H3l3-3.500v12L3 9.500H.5z" /><path d="M8.500 5c1 1.300 1 2.700 0 4" /><path d="M10.500 3c2 2.500 2 5.500 0 8" stroke="#aaa" /><path d="M13 1c3.500 3.500 3.500 8.500 0 12" stroke="#777" />
          </svg>
        </button>
        <button aria-label="Windows Ink" className="mr-[16px]">
          <svg width="17" height="17" viewBox="0 0 17 17" fill="none" stroke="#fff" strokeWidth="1.200">
            <path d="M7 13l-1-3L11.500 1.500c1-1.500 3.500 0 2.500 1.700L8.500 12zM6 10c-3-.5-5 1-5 3.300S4 16 7 13M11 9c3-3 5-2 5-1s-2 1-2 2.500" />
          </svg>
        </button>
        <time dateTime="2023-08-09T14:45" className="text-center leading-[18px]">14:45<br />9.08.2023</time>
        <button aria-label="17 yeni bildirim" className="relative mr-[10px] ml-5 h-full w-[26px]">
          <svg width="26" height="28" viewBox="0 0 26 28" className="mt-3">
            <path d="M0 0h16v12H6l-3 3v-3H0z" fill="#fff" /><path d="M3 3.500h10M3 6.500h10M3 9.500h6" stroke="#111" />
            <circle cx="15.500" cy="15.500" r="9" fill="#3c3c3c" stroke="#858585" />
          </svg>
          <span className="absolute top-[19px] left-[7px] w-[17px] text-center leading-[16px]">17</span>
        </button>
        <span className="mr-1 h-full w-px bg-[#606060]" />
      </div>
    </nav>
  );
}

export default function App() {
  return (
    <div className="flex min-h-screen flex-col bg-[#191919] font-['Open_Sans','Noto_Sans',sans-serif] text-[11px] leading-[16px] text-white">
      <header className="bg-black">
        <TitleBar />
        <TabRow />
      </header>
      <Ribbon />
      <AddressRow />
      <div className="flex flex-1">
        <Sidebar />
        <FileList />
      </div>
      <StatusBar />
      <Taskbar />
    </div>
  );
}
